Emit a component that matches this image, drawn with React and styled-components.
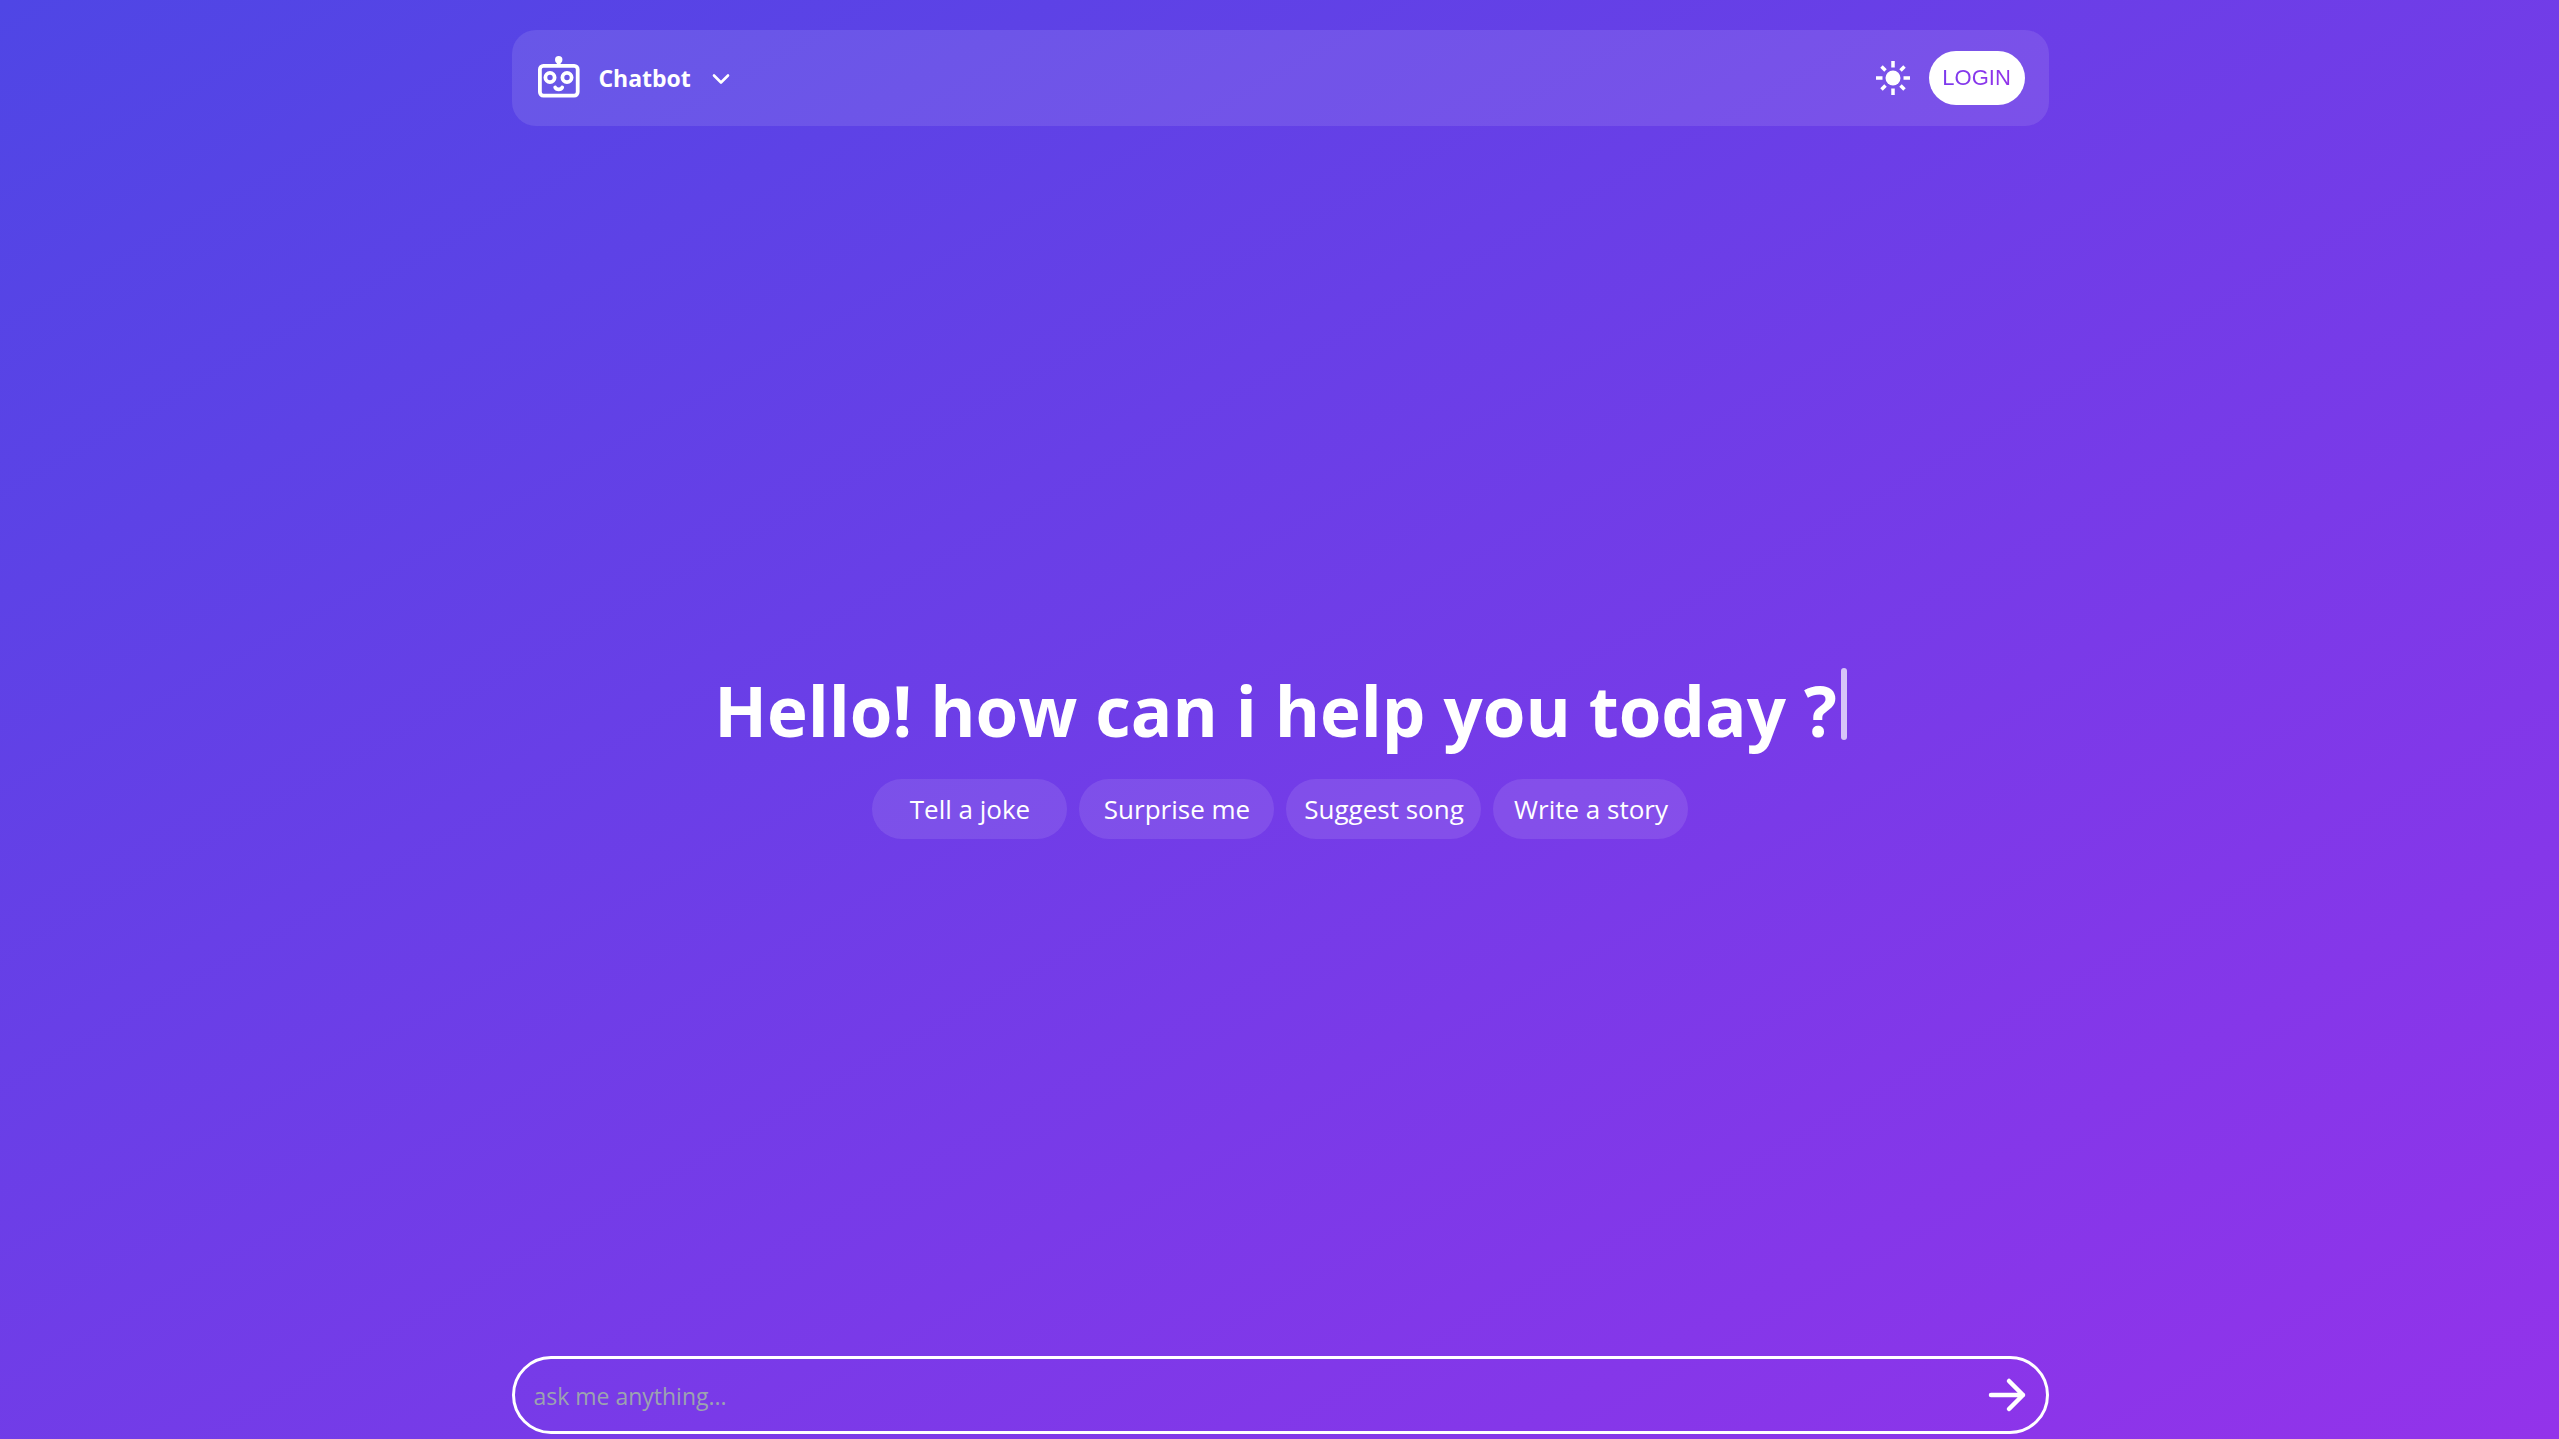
import React, { useState } from "react";
import styled, { createGlobalStyle } from "styled-components";

const GlobalStyle = createGlobalStyle`
  *, *::before, *::after { box-sizing: border-box; }
  body {
    margin: 0;
    color: #fff;
    font-family: "Segoe UI", "Open Sans", "Noto Sans", sans-serif;
  }
  button, input { font: inherit; color: inherit; }
  button { border: 0; padding: 0; background: none; cursor: pointer; }
`;

const Page = styled.div`
  display: flex;
  flex-direction: column;
  align-items: center;
  min-height: 100vh;
  padding: 30px 0 5px 2px;
  background: linear-gradient(to bottom right, #4f46e5, #9333ea);
`;

const Header = styled.header`
  display: flex;
  align-items: center;
  justify-content: space-between;
  width: calc(60% + 2px);
  height: 96px;
  padding: 0 24px;
  border-radius: 24px;
  background: rgba(255, 255, 255, 0.1);
`;

const Brand = styled.button`
  display: flex;
  align-items: center;
  font-size: 23px;
  line-height: 36px;
  font-weight: 700;
`;

const BrandName = styled.span`
  margin: 0 20px 0 18px;
`;

const Actions = styled.div`
  display: flex;
  align-items: center;
  gap: 18px;
`;

const IconButton = styled.button`
  display: flex;
`;

const LoginButton = styled.button`
  width: 96px;
  height: 54px;
  border-radius: 27px;
  background: #fff;
  font-family: Arial, "Liberation Sans", sans-serif;
  font-size: 22px;
`;

const LoginLabel = styled.span`
  background: linear-gradient(to right, #7c3aed, #9333ea);
  background-clip: text;
  color: transparent;
`;

const Main = styled.main`
  flex: 1;
  display: flex;
  flex-direction: column;
  align-items: center;
  justify-content: center;
  gap: 27px;
  padding-top: 24px;
`;

const Greeting = styled.h1`
  display: flex;
  gap: 4px;
  margin: 0;
  font-size: 69px;
  line-height: 84px;
  font-weight: 700;
`;

const Caret = styled.span`
  width: 6px;
  height: 72px;
  border-radius: 3px;
  background: rgba(255, 255, 255, 0.7);
`;

const Suggestions = styled.div`
  display: flex;
  gap: 12px;
`;

const Suggestion = styled.button`
  width: 195px;
  height: 60px;
  border-radius: 30px;
  background: rgba(255, 255, 255, 0.1);
  font-size: 26px;
  white-space: nowrap;
`;

const Prompt = styled.form`
  display: flex;
  align-items: center;
  width: calc(60% + 2px);
  height: 78px;
  padding: 0 18px;
  border: 3px solid #fff;
  border-radius: 39px;
`;

const PromptInput = styled.input`
  flex: 1;
  min-width: 0;
  padding: 2px 0 0;
  border: 0;
  outline: 0;
  background: none;
  font-size: 23px;
  &::placeholder { color: #9ca3af; opacity: 1; }
`;

const RobotIcon = () => (
  <svg width="44" height="44" viewBox="0 0 44 44" fill="none" stroke="#fff" strokeWidth="3.800" aria-hidden="true">
    <rect x="3.900" y="9.800" width="37.800" height="29.800" rx="3.500" />
    <path d="M22.700 4v6" />
    <circle cx="22.700" cy="3.800" r="3.700" fill="#fff" stroke="none" />
    <circle cx="14" cy="21.500" r="4.600" />
    <circle cx="31" cy="21.500" r="4.600" />
    <path d="M19.200 31.500c1.200 2.400 5.800 2.400 7 0" strokeLinecap="round" />
  </svg>
);

const ChevronIcon = () => (
  <svg width="20" height="20" viewBox="0 0 20 20" fill="none" stroke="#fff" strokeWidth="2.600" strokeLinecap="round" strokeLinejoin="round" aria-hidden="true">
    <path d="M3 7.500l7 7 7-7" />
  </svg>
);

const SunIcon = () => (
  <svg width="36" height="36" viewBox="0 0 36 36" fill="#fff" stroke="#fff" strokeWidth="3.500" aria-hidden="true">
    <circle cx="18" cy="18" r="7.500" stroke="none" />
    <path d="M18 1v6.500M18 28.500V35M1 18h6.500M28.500 18H35M6.500 6.500l4 4M25.500 25.500l4 4M29.500 6.500l-4 4M10.500 25.500l-4 4" />
  </svg>
);

const ArrowIcon = () => (
  <svg width="40" height="40" viewBox="0 0 40 40" fill="none" stroke="#fff" strokeWidth="4.500" strokeLinecap="round" strokeLinejoin="round" aria-hidden="true">
    <path d="M3 20h32M21 6l14 14-14 14" />
  </svg>
);

const suggestions = ["Tell a joke", "Surprise me", "Suggest song", "Write a story"];

export default function App() {
  const [prompt, setPrompt] = useState("");
  return (
    <>
      <GlobalStyle />
      <Page>
        <Header>
          <Brand type="button">
            <RobotIcon />
            <BrandName>Chatbot</BrandName>
            <ChevronIcon />
          </Brand>
          <Actions>
            <IconButton type="button" aria-label="Toggle theme"><SunIcon /></IconButton>
            <LoginButton type="button"><LoginLabel>LOGIN</LoginLabel></LoginButton>
          </Actions>
        </Header>
        <Main>
          <Greeting>Hello! how can i help you today ?<Caret /></Greeting>
          <Suggestions>
            {suggestions.map((text) => (
              <Suggestion key={text} type="button" onClick={() => setPrompt(text)}>{text}</Suggestion>
            ))}
          </Suggestions>
        </Main>
        <Prompt onSubmit={(e) => e.preventDefault()}>
          <PromptInput
            aria-label="Message"
            placeholder="ask me anything..."
            value={prompt}
            onChange={(e) => setPrompt(e.target.value)}
          />
          <IconButton type="submit" aria-label="Send"><ArrowIcon /></IconButton>
        </Prompt>
      </Page>
    </>
  );
}
